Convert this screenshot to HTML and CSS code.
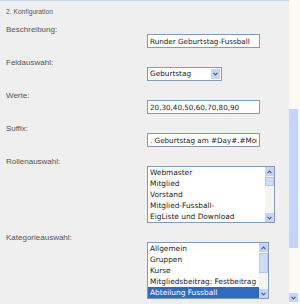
FILE: index.html
```html
<!DOCTYPE html>
<html lang="de">
<head>
    <meta charset="UTF-8">
    <title>Konfiguration</title>
    <link rel="stylesheet" href="styles.css">
</head>
<body>
    <div class="page">
        <div class="content">
            <div class="legend">2. Konfiguration</div>

            <div class="row">
                <label>Beschreibung:</label>
                <div class="field"><input class="text" type="text" value="Runder Geburtstag-Fussball"></div>
            </div>

            <div class="row">
                <label>Feldauswahl:</label>
                <div class="field">
                    <div class="combo">
                        <span class="value">Geburtstag</span>
                        <span class="btn">
                            <svg width="5" height="4" viewBox="0 0 5 4"><path d="M0.5 0.8 L2.5 2.8 L4.5 0.8" fill="none" stroke="#4d6185" stroke-width="1.2"/></svg>
                        </span>
                    </div>
                </div>
            </div>

            <div class="row">
                <label>Werte:</label>
                <div class="field"><input class="text" type="text" value="20,30,40,50,60,70,80,90"></div>
            </div>

            <div class="row">
                <label>Suffix:</label>
                <div class="field"><input class="text" type="text" value=". Geburtstag am #Day#.#Month#"></div>
            </div>

            <div class="row">
                <label>Rollenauswahl:</label>
                <div class="field">
                    <div class="listbox roles">
                        <ul class="options">
                            <li>Webmaster</li>
                            <li>Mitglied</li>
                            <li>Vorstand</li>
                            <li>Mitglied-Fussball-</li>
                            <li>EigListe und Download</li>
                        </ul>
                        <div class="vscroll">
                            <span class="arrow"><svg width="5" height="4" viewBox="0 0 5 4"><path d="M0.5 3.2 L2.5 1.2 L4.5 3.2" fill="none" stroke="#4d6185" stroke-width="1.2"/></svg></span>
                            <span class="thumb"></span>
                            <span class="arrow down"><svg width="5" height="4" viewBox="0 0 5 4"><path d="M0.5 0.8 L2.5 2.8 L4.5 0.8" fill="none" stroke="#4d6185" stroke-width="1.2"/></svg></span>
                        </div>
                    </div>
                </div>
            </div>

            <div class="row">
                <label>Kategorieauswahl:</label>
                <div class="field">
                    <div class="listbox cats">
                        <ul class="options">
                            <li>Allgemein</li>
                            <li>Gruppen</li>
                            <li>Kurse</li>
                            <li>Mitgliedsbeitrag: Festbeitrag</li>
                            <li class="selected">Abteilung Fussball</li>
                        </ul>
                        <div class="vscroll">
                            <span class="arrow"><svg width="5" height="4" viewBox="0 0 5 4"><path d="M0.5 3.2 L2.5 1.2 L4.5 3.2" fill="none" stroke="#4d6185" stroke-width="1.2"/></svg></span>
                            <span class="thumb long"></span>
                            <span class="arrow down"><svg width="5" height="4" viewBox="0 0 5 4"><path d="M0.5 0.8 L2.5 2.8 L4.5 0.8" fill="none" stroke="#4d6185" stroke-width="1.2"/></svg></span>
                        </div>
                    </div>
                </div>
            </div>
        </div>

        <div class="page-scroll">
            <span class="page-thumb"></span>
            <span class="page-down"><svg width="5" height="4" viewBox="0 0 5 4"><path d="M0.5 0.8 L2.5 2.8 L4.5 0.8" fill="none" stroke="#4d6185" stroke-width="1.2"/></svg></span>
        </div>
    </div>
</body>
</html>
```

FILE: styles.css
```css
body {
    margin: 0;
    background-color: #efefef;
    font-family: "Liberation Sans", Arial, sans-serif;
}
.page {
    display: flex;
    height: 304px;
    overflow: hidden;
}
.content {
    width: 289px;
    box-sizing: border-box;
    border-top: 1px solid #c7d6e8;
    padding-left: 6px;
}
.legend {
    font-size: 6.7px;
    line-height: 8px;
    color: #555;
    margin-top: 6.5px;
    margin-bottom: 10.5px;
}
.row {
    margin-bottom: 11px;
}
.row label {
    display: block;
    font-size: 8px;
    line-height: 8px;
    color: #555;
}
.field {
    padding-left: 141px;
}
.text {
    display: block;
    box-sizing: border-box;
    width: 113px;
    height: 14px;
    margin: 0;
    padding: 0 2px;
    border: 1px solid #7f9db9;
    background-color: #fff;
    color: #222;
    font: 7.2px "DejaVu Sans", Verdana, sans-serif;
    outline: none;
}
.combo {
    display: flex;
    box-sizing: border-box;
    width: 75px;
    height: 14px;
    border: 1px solid #7f9db9;
    background-color: #fff;
}
.combo .value {
    flex: 1;
    padding-left: 2px;
    font: 7.3px/12px "DejaVu Sans", Verdana, sans-serif;
    color: #222;
}
.combo .btn {
    width: 9px;
    margin: 1px;
    background-color: #c4d4fc;
    display: flex;
    align-items: center;
    justify-content: center;
}
.listbox {
    display: flex;
    box-sizing: border-box;
    height: 57px;
    border: 1px solid #7f9db9;
    background-color: #fff;
}
.roles {
    width: 128px;
}
.cats {
    width: 122px;
}
.options {
    flex: 1;
    list-style: none;
    margin: 0;
    padding: 0;
    overflow: hidden;
    white-space: nowrap;
    font: 7.4px/11px "DejaVu Sans", Verdana, sans-serif;
    color: #222;
}
.options li {
    padding-left: 2px;
}
.options li.selected {
    background-color: #316ac5;
    color: #fff;
}
.vscroll {
    width: 9px;
    display: flex;
    flex-direction: column;
    background-color: #f5f4ef;
}
.vscroll .arrow {
    height: 9px;
    background-color: #c4d4fc;
    display: flex;
    align-items: center;
    justify-content: center;
}
.vscroll .arrow.down {
    margin-top: auto;
}
.vscroll .thumb {
    height: 9px;
    margin-top: 1px;
    box-sizing: border-box;
    border: 1px solid #b4c8f6;
    background-color: #cddbfc;
}
.vscroll .thumb.long {
    height: 20px;
}
.page-scroll {
    width: 11px;
    display: flex;
    flex-direction: column;
    background-color: #fbfbf4;
}
.page-thumb {
    width: 9px;
    height: 139px;
    margin-top: 109px;
    background-color: #c3d5fd;
}
.page-down {
    width: 9px;
    height: 9px;
    margin-top: auto;
    margin-bottom: 2px;
    background-color: #c4d4fc;
    display: flex;
    align-items: center;
    justify-content: center;
}
```
